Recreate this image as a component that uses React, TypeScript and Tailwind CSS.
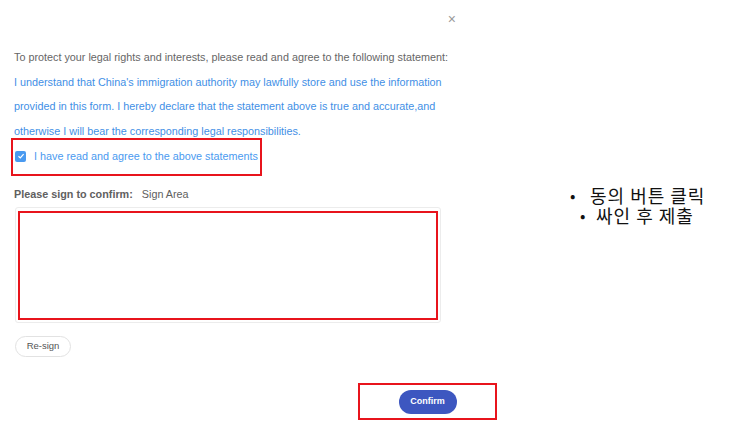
import React from "react";

export default function App() {
  return (
    <div className="w-[740px] h-[431px] bg-white flex font-['Liberation_Sans',Arial,sans-serif] overflow-hidden">
      <div className="w-[470px] flex flex-col pl-[14px]">
        <div className="h-[45px] flex justify-end pr-[14px] pt-[13px]">
          <span className="text-[#9a9a9a] text-[14px] leading-[13px]">×</span>
        </div>
        <div className="text-[10.8px] leading-[24.5px]">
          <div className="text-[#666] whitespace-nowrap">
            To protect your legal rights and interests, please read and agree to the following statement:
          </div>
          <div className="text-[#3f8fe6] w-[440px]">
            I understand that China's immigration authority may lawfully store and use the information provided in this form. I hereby declare that the statement above is true and accurate,and otherwise I will bear the corresponding legal responsibilities.
          </div>
        </div>
        <div className="ml-[-3px] mt-[-5px] w-[251px] h-[38px] border-2 border-[#e8141c] pl-[2px] pt-[9px]">
          <label className="flex items-center gap-[8px] whitespace-nowrap">
            <span className="w-[11px] h-[11px] shrink-0 rounded-[2px] bg-[#4a9af0] flex items-center justify-center">
              <svg width="8" height="8" viewBox="0 0 8 8">
                <path d="M1.5 4.2 L3.3 5.9 L6.6 2.2" stroke="white" strokeWidth="1.2" fill="none" />
              </svg>
            </span>
            <span className="text-[#4a9af0] text-[10.8px] leading-[14px]">I have read and agree to the above statements</span>
          </label>
        </div>
        <div className="mt-[11px] flex items-center text-[10.8px] leading-[14px] text-[#606060]">
          <span className="font-bold">Please sign to confirm:</span>
          <span className="ml-[9px]">Sign Area</span>
        </div>
        <div className="mt-[6px] ml-[1px] w-[426px] h-[116px] border border-[#ececec] rounded-[3px] pt-[3px] pl-[2px]">
          <div className="w-[420px] h-[109px] border-2 border-[#e8141c]"></div>
        </div>
        <div className="mt-[13px] ml-[1px] flex">
          <button className="w-[56px] h-[21px] rounded-full border border-[#e2e2e2] text-[9.5px] text-[#555] bg-white">
            Re-sign
          </button>
        </div>
        <div className="mt-[26px] ml-[344px] w-[139px] h-[37px] border-2 border-[#e8141c] flex items-center justify-center">
          <button className="w-[58px] h-[24px] rounded-full bg-[#3d57c0] text-white text-[9px] font-bold">
            Confirm
          </button>
        </div>
      </div>
      <div className="flex-1 pt-[185px] text-[18px] leading-[20px] tracking-[1px] text-[#111] font-['Noto_Sans_CJK_KR',sans-serif]">
        <div className="flex items-center pl-[100px]">
          <span className="w-[20px] text-[16px]">•</span>
          <span>동의 버튼 클릭</span>
        </div>
        <div className="flex items-center pl-[110px]">
          <span className="w-[16px] text-[16px]">•</span>
          <span>싸인 후 제출</span>
        </div>
      </div>
    </div>
  );
}
